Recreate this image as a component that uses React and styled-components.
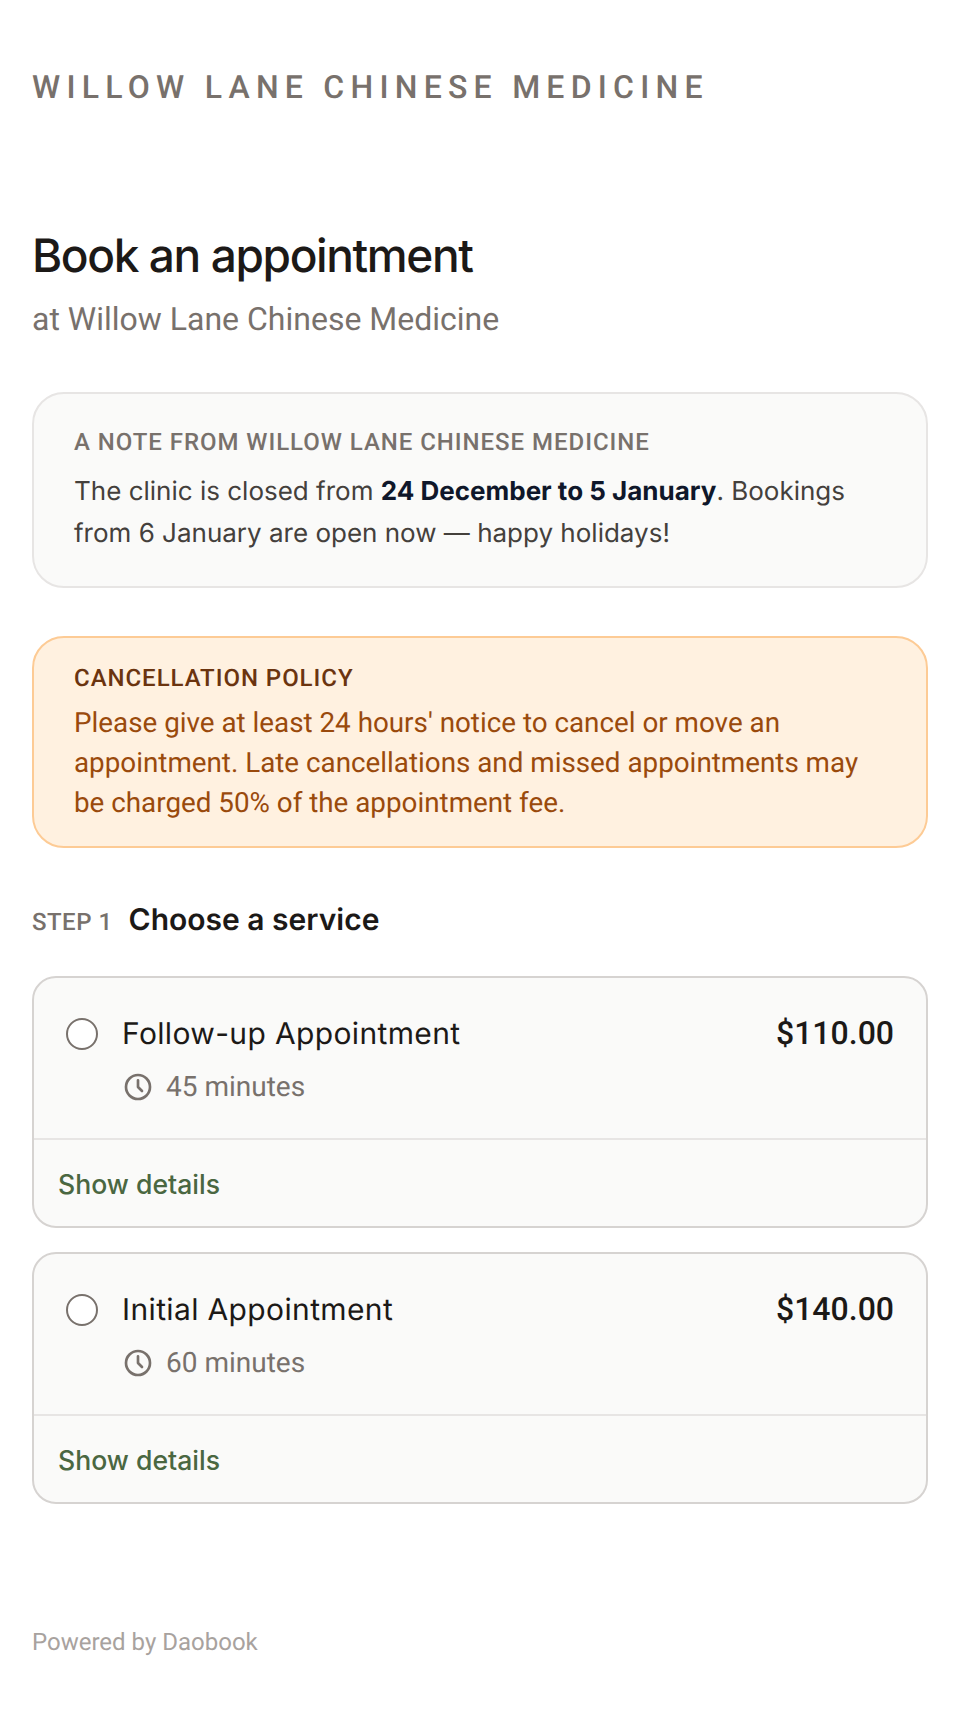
import React from 'react';
import styled, { createGlobalStyle } from 'styled-components';

const GlobalStyle = createGlobalStyle`
    * { box-sizing: border-box; }
    body {
        margin: 0;
        background: #ffffff;
        font-family: Roboto, "Liberation Sans", sans-serif;
        text-rendering: geometricPrecision;
    }
`

const Page = styled.div`
    display: flex;
    flex-direction: column;
    min-height: 1714px;
    padding: 64px 32px 0;
`
const Brand = styled.div`
    font-size: 32px;
    line-height: 46px;
    font-weight: 500;
    letter-spacing: 0.195em;
    color: #78716c;
`
const Title = styled.h1`
    margin: 116px 0 0;
    font-family: Inter, Roboto, sans-serif;
    font-size: 46px;
    line-height: 60px;
    font-weight: 500;
    letter-spacing: -0.03em;
    color: #1c1917;
`
const Subtitle = styled.p`
    margin: 11px 0 0;
    font-size: 32px;
    line-height: 44px;
    color: #78716c;
`
const Notice = styled.section`
    margin-top: ${(props) => props.$top}px;
    padding: ${(props) => (props.$warning ? '24px 40px 23px' : '32px 40px 31px')};
    border: 2px solid ${(props) => (props.$warning ? '#fdcb95' : '#e7e5e4')};
    border-radius: 32px;
    background-color: ${(props) => (props.$warning ? '#fff1e0' : '#fafaf9')};
`
const NoticeLabel = styled.div`
    font-size: 24px;
    line-height: 32px;
    font-weight: 500;
    letter-spacing: 0.04em;
    text-transform: uppercase;
    color: ${(props) => (props.$warning ? '#6b340f' : '#78716c')};
`
const NoticeText = styled.p`
    margin: 13px 0 0;
    font-family: Inter, Roboto, sans-serif;
    font-size: 26px;
    line-height: 42px;
    color: #44403c;

    strong {
        font-weight: 660;
        color: #0f172a;
    }
`
const PolicyText = styled.p`
    margin: 9px 0 0;
    font-size: 27.8px;
    line-height: 40px;
    color: #9a4a0c;
`
const StepHeader = styled.div`
    display: flex;
    align-items: baseline;
    gap: 16px;
    margin-top: 50px;
`
const StepNumber = styled.span`
    font-size: 24px;
    font-weight: 500;
    letter-spacing: 0.02em;
    color: #78716c;
`
const StepTitle = styled.h2`
    margin: 0;
    font-family: Inter, Roboto, sans-serif;
    font-size: 30px;
    line-height: 44px;
    font-weight: 600;
    color: #1c1917;
`
const ServiceList = styled.div`
    display: flex;
    flex-direction: column;
    gap: 24px;
    margin-top: 34px;
`
const ServiceCard = styled.article`
    border: 2px solid #d6d3d1;
    border-radius: 24px;
    background-color: #fafaf9;
`
const ServiceMain = styled.div`
    display: flex;
    align-items: flex-start;
    gap: 24px;
    padding: 32px 32px 31px;
    border-bottom: 2px solid #e7e5e4;
`
const Radio = styled.span`
    flex: none;
    width: 32px;
    height: 32px;
    margin-top: 8px;
    border: 2px solid #78716c;
    border-radius: 50%;
    background-color: #ffffff;
`
const ServiceInfo = styled.div`
    flex: 1;
`
const ServiceName = styled.div`
    font-family: Inter, Roboto, sans-serif;
    font-size: 30px;
    line-height: 48px;
    font-weight: 440;
    letter-spacing: 0.012em;
    color: #1c1917;
`
const Duration = styled.div`
    display: flex;
    align-items: center;
    gap: 12px;
    margin-top: 9px;
    font-size: 28px;
    line-height: 40px;
    color: #78716c;
`
const Price = styled.div`
    font-size: 32px;
    line-height: 47px;
    font-weight: 470;
    color: #1c1917;
`
const DetailsButton = styled.button`
    display: block;
    width: 100%;
    padding: 25px 24px 23px;
    border: none;
    background: transparent;
    font-family: Inter, Roboto, sans-serif;
    font-size: 26.6px;
    line-height: 38px;
    font-weight: 500;
    text-align: left;
    color: #4a6741;
    cursor: pointer;
`
const Footer = styled.footer`
    margin-top: 122px;
    font-size: 24px;
    line-height: 32px;
    color: #a8a29e;
`

const ClockIcon = () => (
    <svg width="32" height="32" viewBox="0 0 24 24" fill="none" stroke="currentColor" strokeWidth="2" strokeLinecap="round" strokeLinejoin="round">
        <circle cx="12" cy="12" r="9" />
        <path d="M12 7v5l3 3" />
    </svg>
)

const services = [
    { name: 'Follow-up Appointment', minutes: 45, price: '$110.00' },
    { name: 'Initial Appointment', minutes: 60, price: '$140.00' },
]

const App = () => {
    return (
        <Page>
            <GlobalStyle />
            <Brand>WILLOW LANE CHINESE MEDICINE</Brand>
            <Title>Book an appointment</Title>
            <Subtitle>at Willow Lane Chinese Medicine</Subtitle>
            <Notice $top={51}>
                <NoticeLabel>A note from Willow Lane Chinese Medicine</NoticeLabel>
                <NoticeText>
                    The clinic is closed from <strong>24 December to 5 January</strong>. Bookings from 6 January are open now — happy holidays!
                </NoticeText>
            </Notice>
            <Notice $top={48} $warning>
                <NoticeLabel $warning>Cancellation policy</NoticeLabel>
                <PolicyText>
                    Please give at least 24 hours' notice to cancel or move an appointment. Late cancellations and missed appointments may be charged 50% of the appointment fee.
                </PolicyText>
            </Notice>
            <StepHeader>
                <StepNumber>STEP 1</StepNumber>
                <StepTitle>Choose a service</StepTitle>
            </StepHeader>
            <ServiceList>
                {services.map((service) => (
                    <ServiceCard key={service.name}>
                        <ServiceMain>
                            <Radio />
                            <ServiceInfo>
                                <ServiceName>{service.name}</ServiceName>
                                <Duration>
                                    <ClockIcon />
                                    {service.minutes} minutes
                                </Duration>
                            </ServiceInfo>
                            <Price>{service.price}</Price>
                        </ServiceMain>
                        <DetailsButton>Show details</DetailsButton>
                    </ServiceCard>
                ))}
            </ServiceList>
            <Footer>Powered by Daobook</Footer>
        </Page>
    );
};

export default App;
